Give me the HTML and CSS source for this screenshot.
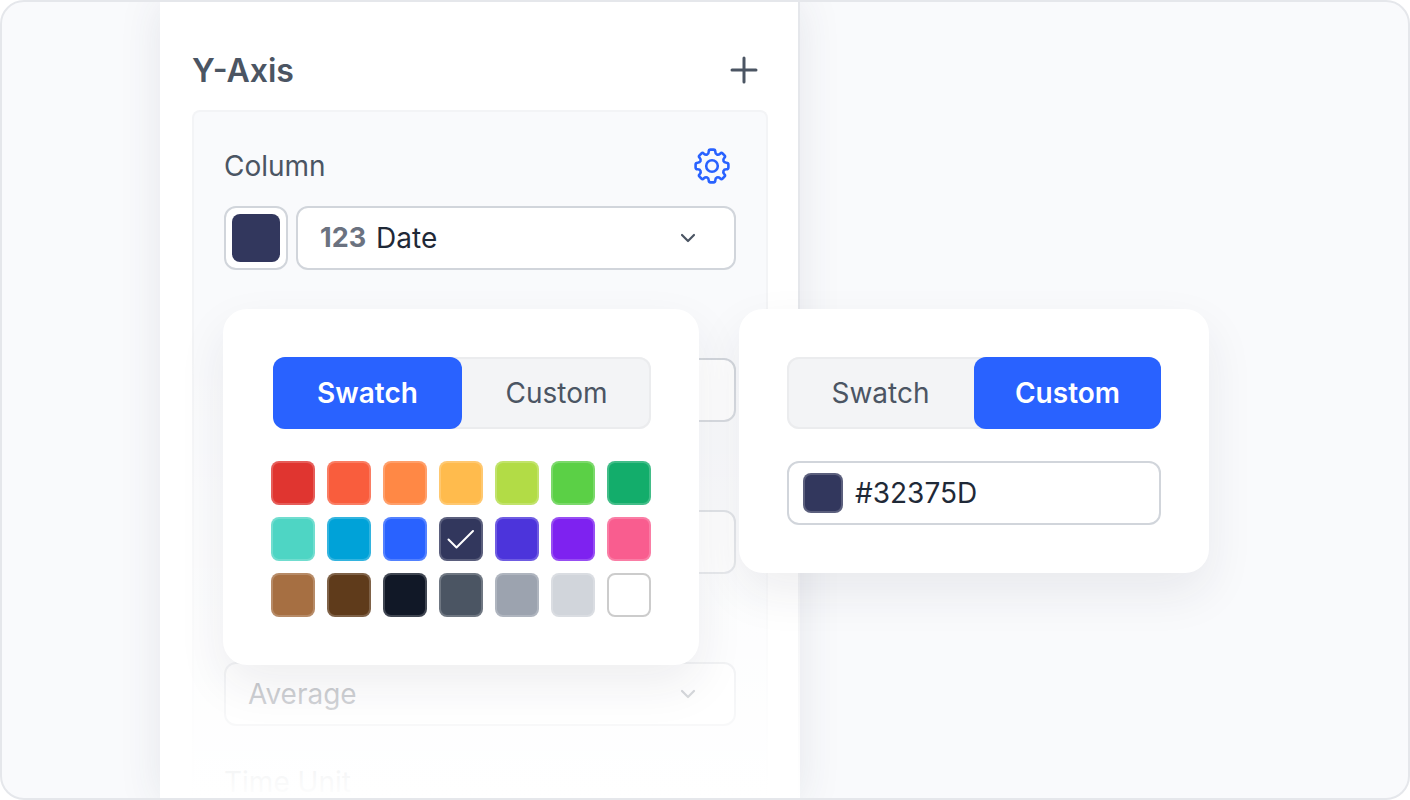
FILE: index.html
```html
<!DOCTYPE html>
<html lang="en">
<head>
<meta charset="utf-8">
<meta name="viewport" content="width=device-width, initial-scale=1">
<title>Y-Axis</title>
<link rel="stylesheet" href="styles.css">
</head>
<body>
<main class="frame">
  <section class="panel">
    <header class="panel-header">
      <h1 class="panel-title">Y-Axis</h1>
      <button class="icon-button" type="button" aria-label="Add">
        <svg class="icon-plus" viewBox="0 0 32 32" aria-hidden="true"><path d="M16 4V28M4 16H28"/></svg>
      </button>
    </header>
    <div class="card">
      <div class="label-row">
        <label class="label" for="column">Column</label>
        <button class="icon-button" type="button" aria-label="Settings">
          <svg class="icon-gear" viewBox="-20 -20 40 40" aria-hidden="true">
            <circle r="5.800"/>
            <path d="M-3.300 -14.300C-3.300 -15.700 -2.600 -16.400 -1.500 -16.400H1.500C2.600 -16.400 3.300 -15.700 3.300 -14.300C3.300 -11.400 6 -10.300 8.100 -12.300C9 -13.200 9.900 -13.200 10.600 -12.500L12.500 -10.600C13.200 -9.900 13.200 -9 12.300 -8.100C10.300 -6 11.400 -3.300 14.300 -3.300C15.700 -3.300 16.400 -2.600 16.400 -1.500V1.500C16.400 2.600 15.700 3.300 14.300 3.300C11.400 3.300 10.300 6 12.300 8.100C13.200 9 13.200 9.900 12.500 10.600L10.600 12.500C9.900 13.200 9 13.200 8.100 12.300C6 10.300 3.300 11.400 3.300 14.300C3.300 15.700 2.600 16.400 1.500 16.400H-1.500C-2.600 16.400 -3.300 15.700 -3.300 14.300C-3.300 11.400 -6 10.300 -8.100 12.300C-9 13.200 -9.900 13.200 -10.600 12.500L-12.500 10.600C-13.200 9.900 -13.200 9 -12.300 8.100C-10.300 6 -11.400 3.300 -14.300 3.300C-15.700 3.300 -16.400 2.600 -16.400 1.500V-1.500C-16.400 -2.600 -15.700 -3.300 -14.300 -3.300C-11.400 -3.300 -10.300 -6 -12.300 -8.100C-13.200 -9 -13.200 -9.900 -12.500 -10.600L-10.600 -12.500C-9.900 -13.200 -9 -13.200 -8.100 -12.300C-6 -10.300 -3.300 -11.400 -3.300 -14.300Z"/>
          </svg>
        </button>
      </div>
      <div class="fields">
        <div class="column-row">
          <button class="color-button" type="button" aria-label="Series color"><span class="color-chip"></span></button>
          <div class="select-box">
            <span class="type-tag">123</span>
            <select class="select" id="column"><option>Date</option></select>
            <svg class="icon-chevron" viewBox="0 0 16 16" aria-hidden="true"><path d="M2 5L8 11L14 5"/></svg>
          </div>
        </div>
        <div class="select-box"><select class="select" aria-label="Option"></select></div>
        <div class="select-box"><select class="select" aria-label="Option"></select></div>
        <div class="select-box">
          <select class="select" aria-label="Aggregation"><option>Average</option></select>
          <svg class="icon-chevron" viewBox="0 0 16 16" aria-hidden="true"><path d="M2 5L8 11L14 5"/></svg>
        </div>
      </div>
      <div class="next-label">Time Unit</div>
    </div>
    <div class="fade"></div>
  </section>

  <section class="popover popover-swatch">
    <div class="tabs tabs-inset">
      <button class="tab tab-active" type="button">Swatch</button>
      <button class="tab" type="button">Custom</button>
    </div>
    <div class="swatches">
      <button class="swatch red" type="button" aria-label="Red"></button>
      <button class="swatch coral" type="button" aria-label="Coral"></button>
      <button class="swatch orange" type="button" aria-label="Orange"></button>
      <button class="swatch yellow" type="button" aria-label="Yellow"></button>
      <button class="swatch lime" type="button" aria-label="Lime"></button>
      <button class="swatch green" type="button" aria-label="Green"></button>
      <button class="swatch emerald" type="button" aria-label="Emerald"></button>
      <button class="swatch teal" type="button" aria-label="Teal"></button>
      <button class="swatch cyan" type="button" aria-label="Cyan"></button>
      <button class="swatch blue" type="button" aria-label="Blue"></button>
      <button class="swatch navy" type="button" aria-label="Navy" aria-pressed="true">
        <svg class="icon-check" viewBox="0 0 28 28" aria-hidden="true"><path d="M1.500 14.500L9.500 22.500L26 6"/></svg>
      </button>
      <button class="swatch indigo" type="button" aria-label="Indigo"></button>
      <button class="swatch purple" type="button" aria-label="Purple"></button>
      <button class="swatch pink" type="button" aria-label="Pink"></button>
      <button class="swatch tan" type="button" aria-label="Tan"></button>
      <button class="swatch brown" type="button" aria-label="Brown"></button>
      <button class="swatch black" type="button" aria-label="Black"></button>
      <button class="swatch slate" type="button" aria-label="Slate"></button>
      <button class="swatch gray" type="button" aria-label="Gray"></button>
      <button class="swatch silver" type="button" aria-label="Silver"></button>
      <button class="swatch white" type="button" aria-label="White"></button>
    </div>
  </section>

  <section class="popover popover-custom">
    <div class="tabs">
      <button class="tab" type="button">Swatch</button>
      <button class="tab tab-active" type="button">Custom</button>
    </div>
    <label class="hex-field">
      <span class="hex-chip"></span>
      <input class="hex-input" type="text" value="#32375D" aria-label="Hex color">
    </label>
  </section>
</main>
</body>
</html>
```
FILE: styles.css
```css
* { box-sizing: border-box; }

body {
  margin: 0;
  background: #fff;
  font-family: Inter, "Liberation Sans", sans-serif;
  font-size: 28px;
  line-height: 40px;
  color: #4b5563;
}

button, input, select {
  margin: 0;
  padding: 0;
  border: 0;
  background: none;
  font: inherit;
  color: inherit;
}

svg { display: block; fill: none; stroke: currentColor; stroke-linecap: round; stroke-linejoin: round; }

.frame {
  position: relative;
  height: 100vh;
  padding-left: 158px;
  overflow: hidden;
  border: 2px solid #e5e7eb;
  border-radius: 24px;
  background: #f9fafc;
}

.panel {
  position: relative;
  width: 640px;
  min-height: 100%;
  padding: 48px 30px 0 32px;
  border-right: 2px solid #e5e7eb;
  background: #fff;
  box-shadow: 0 0 40px rgba(50, 55, 93, 0.1);
}

.panel-header {
  display: flex;
  align-items: center;
  justify-content: space-between;
  padding-right: 8px;
}

.panel-title { margin: 0; padding-top: 2px; font-size: 32px; line-height: 38px; font-weight: 600; }
.icon-button { display: block; }
.icon-plus { width: 32px; height: 32px; stroke-width: 3; }
.icon-gear { width: 40px; height: 40px; color: #2962ff; stroke-width: 2.600; }
.icon-chevron { width: 16px; height: 16px; color: #4b5563; stroke-width: 2.200; }

.card {
  margin-top: 20px;
  padding: 34px 30px 0;
  border: 2px solid #f3f4f6;
  border-bottom: 0;
  border-radius: 8px 8px 0 0;
  background: #f9fafc;
}

.label-row {
  display: flex;
  align-items: center;
  justify-content: space-between;
  padding-right: 4px;
  margin-bottom: 20px;
}

.fields { display: flex; flex-direction: column; gap: 88px; }
.column-row { display: flex; gap: 8px; }

.color-button {
  width: 64px;
  height: 64px;
  padding: 6px;
  border: 2px solid #d1d5db;
  border-radius: 12px;
  background: #fff;
}

.color-chip { display: block; height: 48px; border-radius: 8px; background: #32375d; }

.select-box {
  display: flex;
  flex: 1 0 auto;
  align-items: center;
  gap: 10px;
  height: 64px;
  padding: 0 38px 0 22px;
  border: 2px solid #d1d5db;
  border-radius: 12px;
  background: #fff;
  color: #1f2937;
}

.column-row .select-box { flex: 1; }
.type-tag { font-weight: 700; font-size: 27px; color: #6b7280; }
.select { flex: 1; min-width: 0; height: 40px; appearance: none; }
.next-label { margin-top: 36px; }

.fade {
  position: absolute;
  top: 338px;
  right: -2px;
  bottom: 0;
  left: 0;
  background: linear-gradient(rgba(255, 255, 255, 0), rgba(255, 255, 255, 0.78) 77%, rgba(255, 255, 255, 0.96) 95%, #fff);
  pointer-events: none;
}

.popover {
  position: absolute;
  top: 307px;
  padding: 48px;
  border-radius: 24px;
  background: #fff;
  box-shadow: 0 20px 48px rgba(40, 44, 70, 0.08);
}

.popover-swatch { left: 221px; width: 476px; }
.popover-custom { left: 737px; width: 470px; }

.tabs {
  display: flex;
  height: 72px;
  margin-bottom: 32px;
  border-radius: 12px;
  background: #f3f4f6;
  box-shadow: inset 0 0 0 2px #ebecee;
}

.tabs-inset { margin-left: 2px; }
.tab { flex: 1; border-radius: 12px; }
.tab-active { background: #2962ff; color: #fff; font-weight: 600; }

.swatches { display: grid; grid-template-columns: repeat(7, 44px); gap: 12px; }

.swatch {
  display: flex;
  align-items: center;
  justify-content: center;
  height: 44px;
  border: 2px solid rgba(255, 255, 255, 0.2);
  border-radius: 8px;
  color: #fff;
}

.icon-check { width: 28px; height: 28px; stroke-width: 2; }

.red { background-color: #e03530; }
.coral { background-color: #f95d3d; }
.orange { background-color: #ff8845; }
.yellow { background-color: #ffbb4d; }
.lime { background-color: #b2dc46; }
.green { background-color: #5bd046; }
.emerald { background-color: #13ad6b; }
.teal { background-color: #4ed5c4; }
.cyan { background-color: #00a2d8; }
.blue { background-color: #2962ff; }
.navy { background-color: #32375d; }
.indigo { background-color: #4c34db; }
.purple { background-color: #7e22f0; }
.pink { background-color: #f95d8f; }
.tan { background-color: #a66f42; }
.brown { background-color: #5f3b1b; }
.black { background-color: #111827; }
.slate { background-color: #4b5563; }
.gray { background-color: #9ca3af; }
.silver { background-color: #d1d5db; }
.white { background-color: #fff; border-color: #ccc; }

.hex-field {
  display: flex;
  align-items: center;
  gap: 12px;
  height: 64px;
  padding: 0 14px;
  border: 2px solid #d1d5db;
  border-radius: 12px;
  color: #1f2937;
}

.hex-chip {
  width: 40px;
  height: 40px;
  border: 2px solid rgba(255, 255, 255, 0.2);
  border-radius: 8px;
  background-color: #32375d;
}

.hex-input { flex: 1; min-width: 0; height: 40px; }
```
